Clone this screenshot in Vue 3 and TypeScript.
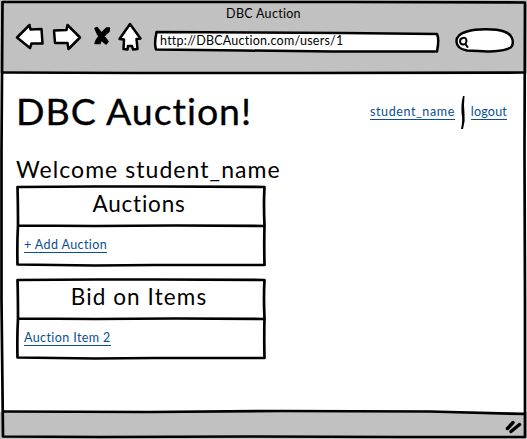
<script setup lang="ts">
interface Panel {
  title: string
  link: string
  kind: string
}

const user = 'student_name'
const panels: Panel[] = [
  { title: 'Auctions', link: '+ Add Auction', kind: 'auctions' },
  { title: 'Bid on Items', link: 'Auction Item 2', kind: 'bids' },
]
</script>

<template>
  <div class="window">
    <header class="chrome">
      <div class="window-title"><span>DBC Auction</span></div>
      <div class="toolbar">
        <svg class="nav" width="132" height="32" viewBox="0 0 132 32">
          <g class="shape">
            <path d="M2 16.500 L14.500 4 L15.500 8.500 L26.500 8 L27.500 22.500 L16.500 22.500 L15 27 Z" />
            <path d="M39 9.500 L51.500 9 L52.500 4 L65 16.500 L53.500 28 L52.500 22 L40 22 Z" />
            <path d="M115 3 L125.500 17.500 L121.500 18 L122.500 28 L118 28.500 L117 25 L113 25 L112.500 28.500 L108.500 28 L109 18.500 L104.500 18 Z" />
          </g>
          <path class="cross" d="M80 7.500 L82 6.500 Q86.500 12 93 20.500 L91 23 Q84 18 80 7.500 Z M94.500 7 L94 10.500 Q87 16 85 22.500 L80 22.500 Q82 15.500 91.500 7 Z" />
        </svg>
        <div class="address">
          <svg class="outline" width="288" height="24" viewBox="0 0 288 24">
            <path class="shape" d="M3.500 3 L100 3.500 L190 4 L284 5 Q286.500 10 284 22.500 L180 22.500 L90 21.500 L3 20.500 Q1 15 3.500 3 Z" />
          </svg>
          <span>http://DBCAuction.com/users/1</span>
        </div>
        <svg class="search" width="62" height="28" viewBox="0 0 62 28">
          <path class="shape" d="M13 4.500 C22 1.500 42 1.500 50 4.500 C57 6.500 60.500 13 58 19 C56 23 46 24 36 24.500 C28 25 23 23.500 13 23.500 C-1 21 -1 8 13 4.500 Z" />
          <path class="lens" d="M9 11 C13.500 9.500 13.500 17.500 9.500 17.500 C5 17.500 5 11.500 9 11 M11.500 17 L13.500 20" />
        </svg>
      </div>
    </header>

    <main class="page">
      <div class="masthead">
        <h1>DBC Auction!</h1>
        <nav class="account">
          <a class="profile">{{ user }}</a>
          <svg width="6" height="36" viewBox="0 0 6 36">
            <path d="M3 1 Q1 8 1.500 18 Q3 25 1 34 L3 34 Q5.500 26 4.500 18 Q3.500 10 4.500 1 Z" />
          </svg>
          <a class="logout">logout</a>
        </nav>
      </div>
      <h2>Welcome {{ user }}</h2>
      <section v-for="panel in panels" :key="panel.kind" class="panel" :class="panel.kind">
        <svg class="outline" width="252" height="84" viewBox="0 0 252 84">
          <path class="line" d="M2.500 3 L80 2.500 L140 2.500 L249.500 3 Q248.500 20 249.500 41 Q249 60 249.500 81 L140 81 L80 81.500 L2.500 80.500 Q2 60 3 41 Q3 20 2.500 3 Z M3 41.500 L80 42 L160 41.500 L249 42" />
        </svg>
        <h3><span>{{ panel.title }}</span></h3>
        <div class="body"><a>{{ panel.link }}</a></div>
      </section>
    </main>

    <footer class="status">
      <svg width="18" height="16" viewBox="0 0 18 16">
        <path d="M2.500 9.500 L8 3.500 M6 12.500 L14.500 5.500" />
      </svg>
    </footer>

    <svg class="frame" width="527" height="439" viewBox="0 0 527 439">
      <path class="line" d="M2.500 2 L180 2 L350 2 L525 2.500 L524.500 150 L525 300 L525 437 L400 437 L250 436.500 L100 437 L3 436.500 L1.500 300 L1.500 150 Z" />
      <path class="line" d="M3 72.500 L140 73 L300 73 L524 72.500 M3 411.500 L150 412 L280 411 L430 411.500 L525 414" />
    </svg>
  </div>
</template>

<style>
body {
  background: #fff;
}
</style>

<style scoped>
.window {
  position: relative;
  display: flex;
  flex-direction: column;
  width: 527px;
  height: 439px;
  overflow: hidden;
  background: #fff;
  color: #000;
  font-family: Lato, "Open Sans", sans-serif;
}

svg {
  display: block;
  flex: none;
}

.shape {
  fill: #fff;
  stroke: #000;
  stroke-width: 2.5;
  stroke-linejoin: round;
}

.line {
  fill: none;
  stroke: #000;
  stroke-width: 2.7;
  stroke-linejoin: round;
}

.frame,
.outline {
  position: absolute;
  top: 0;
  left: 0;
  pointer-events: none;
}

.chrome {
  box-sizing: border-box;
  height: 73px;
  padding: 5px 0 0 2px;
  background: #c1c1c1;
}

.window-title {
  height: 16px;
  padding-right: 2px;
  font-size: 12.5px;
  line-height: 17px;
  letter-spacing: 0.3px;
  text-align: center;
}

.toolbar {
  display: flex;
  align-items: flex-start;
  padding-left: 13px;
}

.cross {
  fill: #000;
  stroke: #000;
  stroke-width: 1.5;
  stroke-linejoin: round;
}

.address {
  position: relative;
  width: 288px;
  height: 24px;
  margin: 8px 0 0 6px;
  font-size: 12.5px;
  line-height: 24px;
  letter-spacing: 0.24px;
}

.address span {
  position: relative;
  padding-left: 7px;
}

.search {
  margin: 6px 0 0 13px;
}

.lens {
  fill: none;
  stroke: #000;
  stroke-width: 2;
  stroke-linecap: round;
}

.page {
  flex: 1;
  padding: 0 20px 0 16px;
}

.masthead {
  display: flex;
  justify-content: space-between;
  height: 82px;
}

h1,
h2,
h3 {
  margin: 0;
  font-weight: 400;
  white-space: nowrap;
}

h1 {
  padding-top: 15px;
  font-size: 37.5px;
  line-height: 46px;
  letter-spacing: 0.95px;
  -webkit-text-stroke: 0.35px #000;
}

.account {
  display: flex;
  padding-top: 22px;
}

.account svg {
  margin: 0 5px;
}

a {
  display: inline-block;
  height: 15px;
  border-bottom: 1px solid #0b4f93;
  color: #0b4f93;
  font-size: 12.5px;
  line-height: 15px;
  letter-spacing: 0.4px;
  white-space: nowrap;
}

.account a {
  margin-top: 9px;
}

.account .profile {
  letter-spacing: 0.6px;
}

.account .logout {
  letter-spacing: 0.2px;
}

h2 {
  height: 30px;
  font-size: 23px;
  line-height: 28px;
  letter-spacing: 1.05px;
}

.panel {
  position: relative;
  width: 252px;
  height: 84px;
  margin: -1px 0 10px -1px;
}

.panel h3 {
  height: 41px;
  padding: 1px 4px 0 0;
  box-sizing: border-box;
  font-size: 22.5px;
  line-height: 38px;
  letter-spacing: 0.8px;
  text-align: center;
}

.panel.bids h3 {
  letter-spacing: 1.1px;
}

.body {
  display: flex;
  padding: 12px 9px;
}

.status {
  display: flex;
  justify-content: flex-end;
  box-sizing: border-box;
  height: 27px;
  padding: 7px 4px 0 0;
  background: #c1c1c1;
}

.status path {
  fill: none;
  stroke: #000;
  stroke-width: 3.5;
  stroke-linecap: round;
}
</style>
